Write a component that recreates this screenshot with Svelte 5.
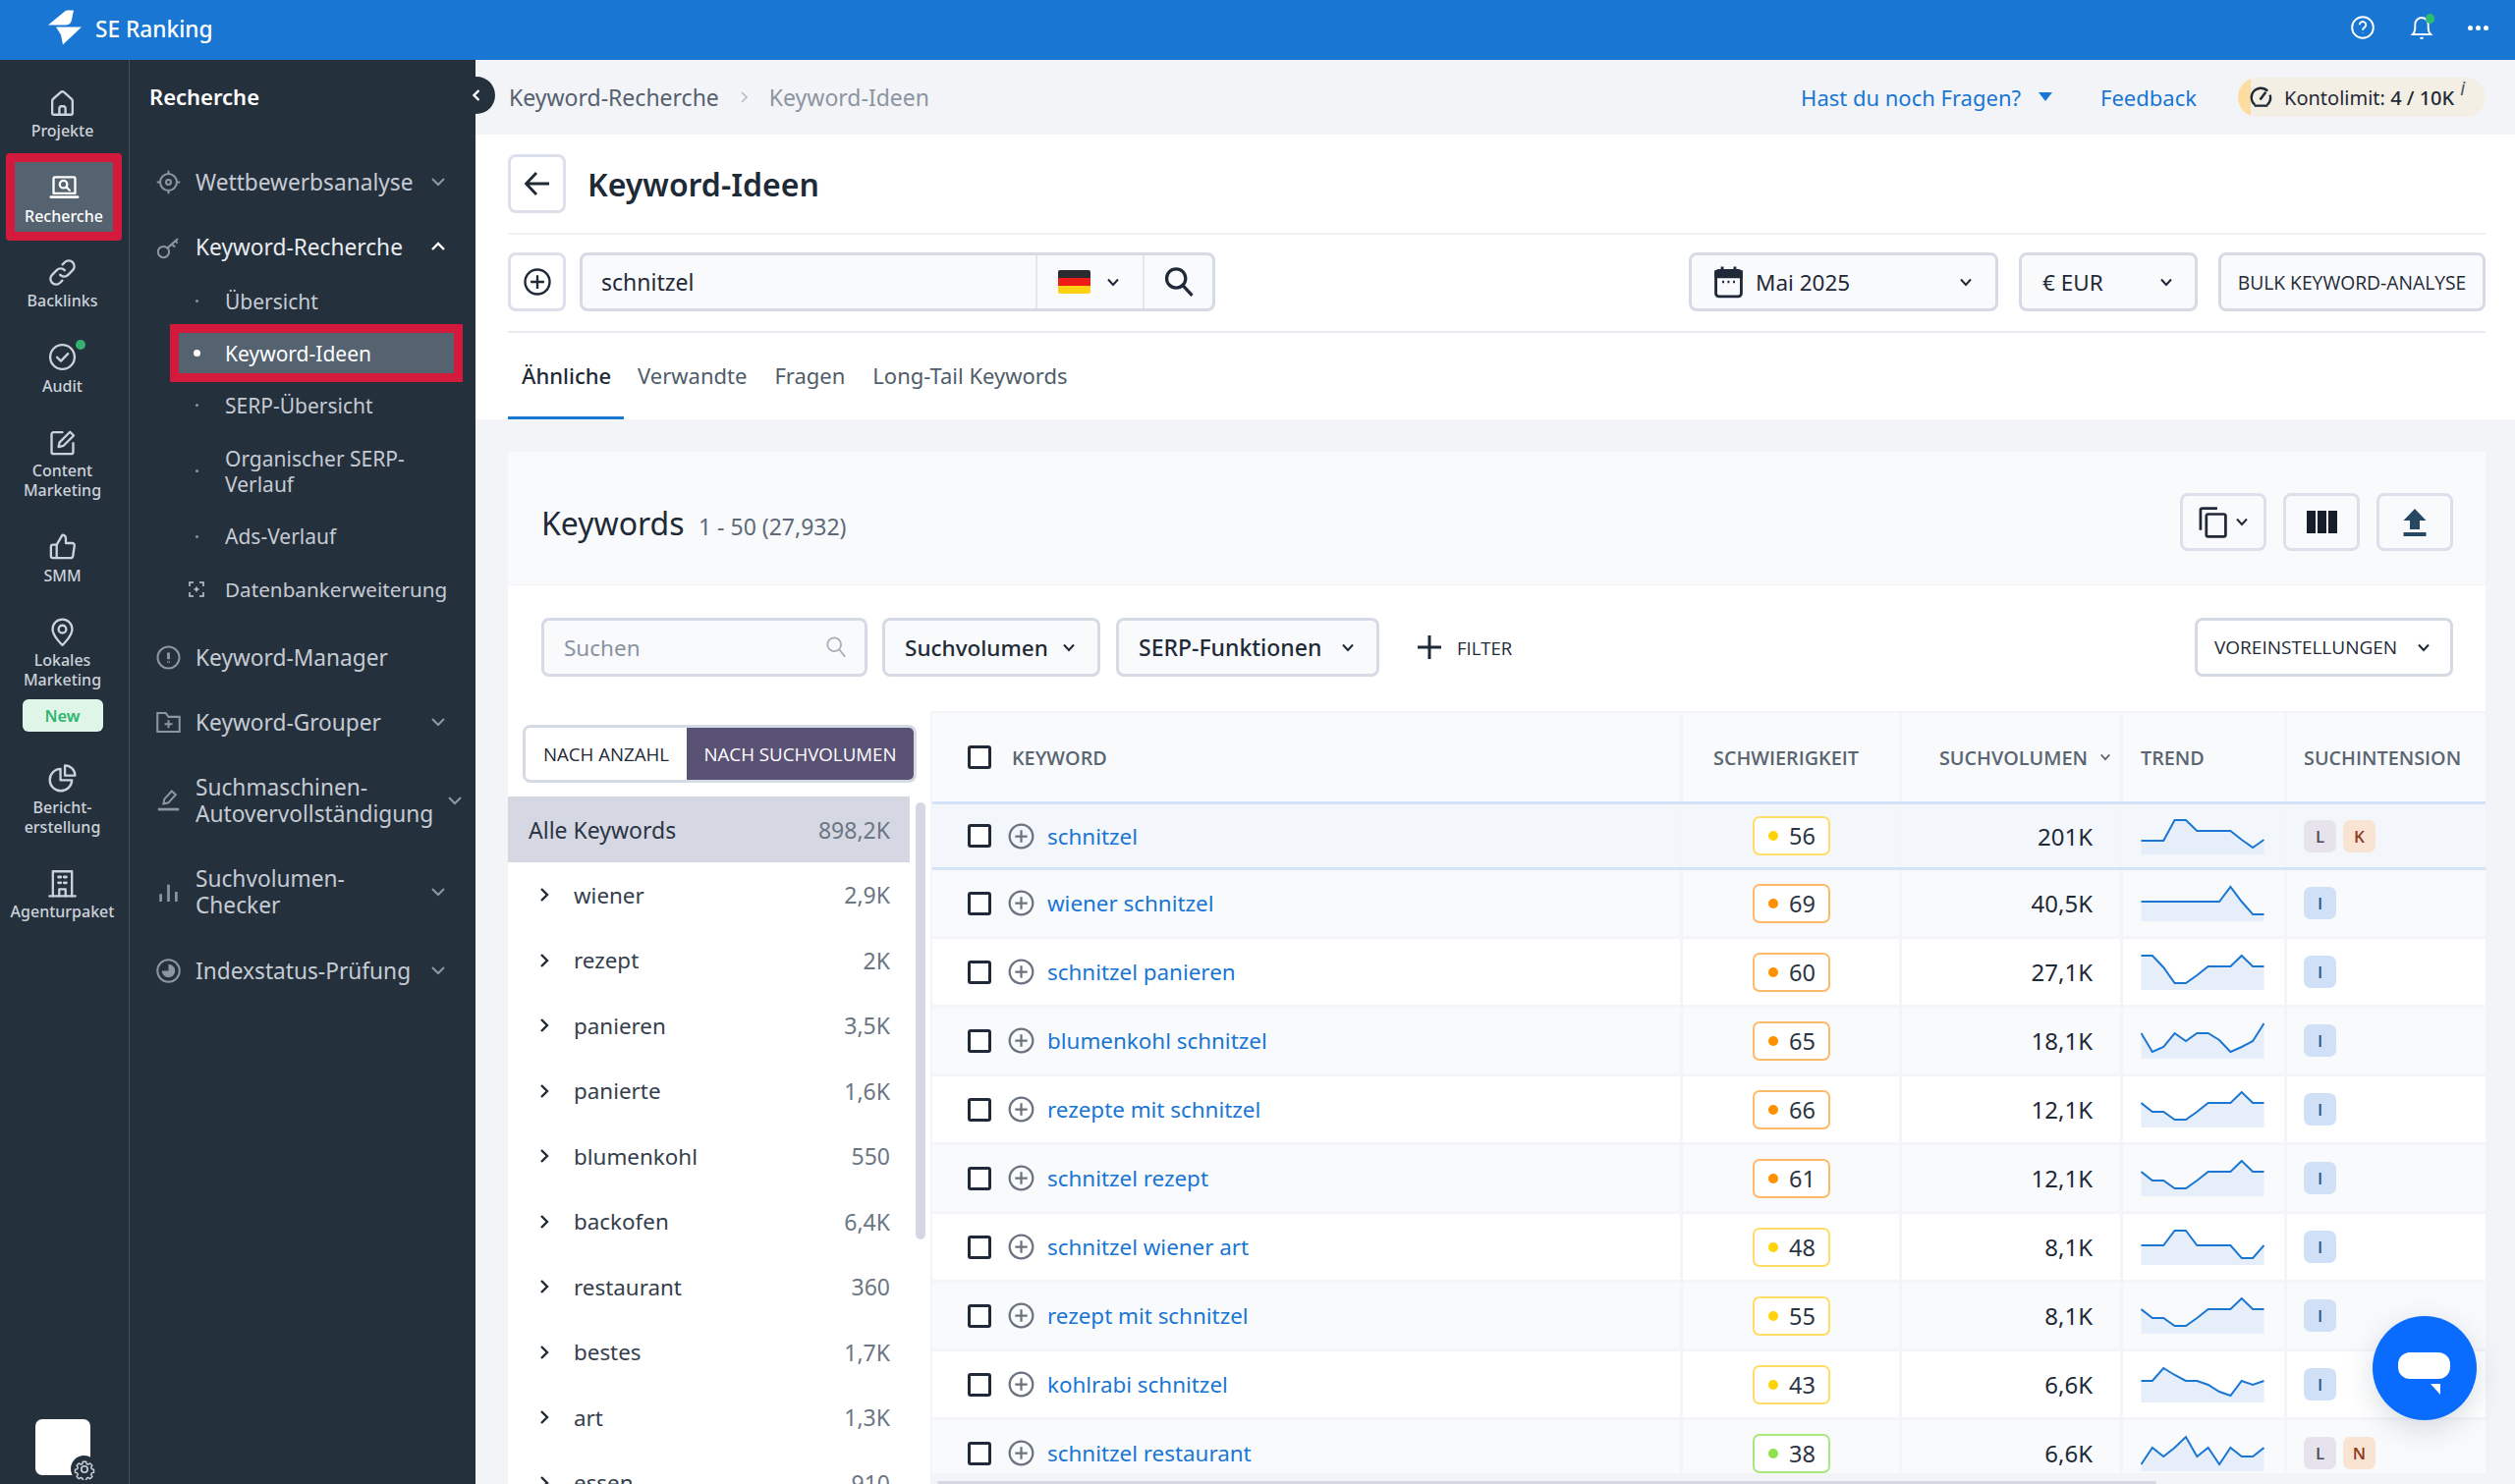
<script>
	const railItems = [
		{ icon: 'home', lines: ['Projekte'] },
		{ icon: 'research', lines: ['Recherche'], active: true },
		{ icon: 'link', lines: ['Backlinks'] },
		{ icon: 'audit', lines: ['Audit'], dot: true },
		{ icon: 'edit', lines: ['Content', 'Marketing'] },
		{ icon: 'thumb', lines: ['SMM'] },
		{ icon: 'pin', lines: ['Lokales', 'Marketing'], isNew: true },
		{ icon: 'pie', lines: ['Bericht-', 'erstellung'] },
		{ icon: 'building', lines: ['Agenturpaket'] }
	];

	const icons = {
		home: '<path d="M5 21.5a1 1 0 0 1-1-1V10.6a2 2 0 0 1 .7-1.5l6-5.3a2 2 0 0 1 2.6 0l6 5.3a2 2 0 0 1 .7 1.5v9.9a1 1 0 0 1-1 1z"/><path d="M9.6 21.5v-5.2a1.4 1.4 0 0 1 1.4-1.4h2a1.4 1.4 0 0 1 1.4 1.4v5.2"/>',
		research: '<path d="M3.5 17V5.2a1 1 0 0 1 1-1h15a1 1 0 0 1 1 1V17z"/><path d="M1.5 19.8h21" stroke-width="2.2"/><circle cx="11.3" cy="9.8" r="2.9"/><path d="m13.5 12 2.6 2.5"/>',
		link: '<path d="M10.2 13.8a4.4 4.4 0 0 0 6.3 0l3.6-3.6a4.4 4.4 0 0 0-6.2-6.3l-1.8 1.8"/><path d="M13.8 10.2a4.4 4.4 0 0 0-6.3 0l-3.6 3.6a4.4 4.4 0 0 0 6.2 6.3l1.8-1.8"/>',
		audit: '<circle cx="12" cy="12" r="9.6"/><path d="m7.8 12.2 3 3 5.6-5.8"/>',
		edit: '<path d="M12 4H5a1.5 1.5 0 0 0-1.5 1.5v14A1.5 1.5 0 0 0 5 21h14a1.5 1.5 0 0 0 1.5-1.5V12.5"/><path d="m9 15.5.8-3.6 8.2-8.2 2.9 2.9-8.2 8.1z"/>',
		thumb: '<path d="M7.5 21H4.6A1.6 1.6 0 0 1 3 19.4v-7.2a1.6 1.6 0 0 1 1.6-1.6h2.9z"/><path d="M7.5 10.6 12 2.8a2.7 2.7 0 0 1 2.7 2.7v3.8h5a1.8 1.8 0 0 1 1.8 2.1l-1.2 8a1.8 1.8 0 0 1-1.8 1.6H7.5"/>',
		pin: '<path d="M12 22.3s-7.7-7-7.7-12.6a7.7 7.7 0 0 1 15.4 0c0 5.6-7.7 12.6-7.7 12.6z"/><circle cx="12" cy="9.8" r="3"/>',
		pie: '<path d="M10.5 4.5a8.7 8.7 0 1 0 9 9h-9z"/><path d="M14 1.8a8 8 0 0 1 8 8h-8z"/>',
		building: '<path d="M1.8 22h20.4"/><path d="M4.5 22V2.5h15V22"/><path d="M9.5 22v-5.5h5V22"/><path d="M9 7h1.6M13.4 7H15M9 11.5h1.6M13.4 11.5H15" stroke-width="2.2"/>',
		target: '<circle cx="12" cy="12" r="7.5"/><circle cx="12" cy="12" r="2.2"/><path d="M12 1.5v3M12 19.5v3M1.5 12h3M19.5 12h3"/>',
		key: '<circle cx="7.5" cy="16.5" r="5"/><path d="m11 13 9.5-8.5M15 9.5l3 2.5M18.2 6.7l2 1.8"/>',
		info: '<circle cx="12" cy="12" r="9.8"/><path d="M12 13.5V7.5" stroke-width="2.6"/><circle cx="12" cy="16" r=".3"/>',
		folder: '<path d="M2 20.5V3.5h7.5L12 7h10v13.5z"/><path d="M12 10v7M8.5 13.5h7"/>',
		pencil: '<path d="m7.5 15.5.8-4.3 6.6-7.2 3.6 3.2-6.6 7.3z"/><path d="M2.5 20.5h19" stroke-width="2.4"/>',
		bars: '<path d="M5 20.5v-7M12 20.5V5M19 20.5v-9" stroke-width="2.4"/>',
		index: '<circle cx="12" cy="12" r="10"/><path d="M12 6a6 6 0 1 1-6 6h6z" fill="currentColor" stroke="none"/>'
	};

	const subItems = [
		{ label: 'Übersicht' },
		{ label: 'Keyword-Ideen', active: true },
		{ label: 'SERP-Übersicht' },
		{ label: 'Organischer SERP-Verlauf', tall: true },
		{ label: 'Ads-Verlauf' }
	];
	const navBottom = [
		{ icon: 'info', label: 'Keyword-Manager' },
		{ icon: 'folder', label: 'Keyword-Grouper', chev: true },
		{ icon: 'pencil', label: 'Suchmaschinen-Autovervollständigung', chev: true, tall: true, far: true },
		{ icon: 'bars', label: 'Suchvolumen-Checker', chev: true, tall: true },
		{ icon: 'index', label: 'Indexstatus-Prüfung', chev: true }
	];

	const groups = [
		['wiener', '2,9K'], ['rezept', '2K'], ['panieren', '3,5K'], ['panierte', '1,6K'],
		['blumenkohl', '550'], ['backofen', '6,4K'], ['restaurant', '360'], ['bestes', '1,7K'],
		['art', '1,3K'], ['essen', '910']
	];

	const shapeA = [11, 20, 20, 28, 28, 20, 11, 11, 11, 0, 11, 11];
	const rows = [
		{ kw: 'schnitzel', diff: 56, vol: '201K', trend: [22, 22, 22, 1, 1, 12, 12, 12, 12, 21, 29, 21], intents: ['L', 'K'] },
		{ kw: 'wiener schnitzel', diff: 69, vol: '40,5K', trend: [16, 16, 16, 16, 16, 16, 16, 16, 1, 16, 29, 29], intents: ['I'] },
		{ kw: 'schnitzel panieren', diff: 60, vol: '27,1K', trend: [1, 1, 13, 29, 29, 21, 12, 12, 12, 1, 12, 12], intents: ['I'] },
		{ kw: 'blumenkohl schnitzel', diff: 65, vol: '18,1K', trend: [10, 29, 24, 10, 18, 10, 10, 17, 29, 24, 18, 0], intents: ['I'] },
		{ kw: 'rezepte mit schnitzel', diff: 66, vol: '12,1K', trend: shapeA, intents: ['I'] },
		{ kw: 'schnitzel rezept', diff: 61, vol: '12,1K', trend: shapeA, intents: ['I'] },
		{ kw: 'schnitzel wiener art', diff: 48, vol: '8,1K', trend: [16, 16, 16, 1, 1, 16, 16, 16, 16, 29, 29, 16], intents: ['I'] },
		{ kw: 'rezept mit schnitzel', diff: 55, vol: '8,1K', trend: shapeA, intents: ['I'] },
		{ kw: 'kohlrabi schnitzel', diff: 43, vol: '6,6K', trend: [14, 14, 1, 8, 14, 14, 18, 25, 29, 14, 18, 14], intents: ['I'] },
		{ kw: 'schnitzel restaurant', diff: 38, vol: '6,6K', trend: [29, 12, 21, 12, 1, 21, 12, 29, 12, 21, 21, 12], intents: ['L', 'N'] }
	];

	function linePoints(t) {
		return t.map((v, i) => `${(i * 125) / 11},${v + 1}`).join(' ');
	}
	function areaPoints(t) {
		return `0,37 ${linePoints(t)} 125,37`;
	}
	function diffClass(d) {
		if (d < 40) return 'green';
		return d < 60 ? 'yellow' : 'orange';
	}
</script>

<div class="app">
	<header class="topbar">
		<svg class="logo" width="36" height="40" viewBox="0 0 36 40"><path d="M0 17.5 17 3.500Q18 2.500 20 2.500H26L24 12Q23.500 17.500 17 17.500z" /><path d="M8 19.500H34L15 37.500 13 27.500z" /></svg>
		<span class="brand">SE Ranking</span>
		<div class="top-icons">
			<svg width="26" height="26" viewBox="0 0 24 24" fill="none" stroke="#fff" stroke-width="1.8"><circle cx="12" cy="12" r="10" /><path d="M9 9.5a3 3 0 1 1 4.5 2.6c-1 .6-1.500 1.200-1.500 2.400" /><path d="M12 17.2v.3" /></svg>
			<span class="bell">
				<svg width="26" height="28" viewBox="0 0 24 26" fill="none" stroke="#fff" stroke-width="1.8"><path d="M3.5 19.500c1.500-1.500 2.300-3 2.300-6.500V10a6.200 6.200 0 0 1 12.400 0v3c0 3.500.8 5 2.300 6.500z" /><path d="M10.5 23h3" /></svg>
				<i></i>
			</span>
			<span class="dots"><i></i><i></i><i></i></span>
		</div>
	</header>

	<div class="body">
		<aside class="rail">
			{#each railItems as item}
				<div class="rail-item" class:active={item.active}>
					<span class="rail-icon">
						<svg width="31" height="31" viewBox="0 0 24 24" fill="none" stroke="currentColor" stroke-width="1.8" stroke-linecap="round" stroke-linejoin="round">{@html icons[item.icon]}</svg>
						{#if item.dot}<i class="rail-dot"></i>{/if}
					</span>
					<span class="rail-label">
						{#each item.lines as line}<span>{line}</span>{/each}
					</span>
					{#if item.isNew}<span class="new-badge">New</span>{/if}
				</div>
			{/each}
			<div class="avatar">
				<span class="gear">
					<svg width="22" height="22" viewBox="0 0 24 24" fill="none" stroke="#c8ced6" stroke-width="1.8" stroke-linejoin="round"><circle cx="12" cy="12" r="3.5" /><path d="M10 2.500h4l.6 2.800 1.800.8 2.500-1.500 2.700 2.800-1.500 2.400.8 1.900 2.600.6v3.800l-2.600.6-.8 1.900 1.500 2.400-2.700 2.800-2.500-1.500-1.800.8-.6 2.800h-4l-.6-2.800-1.800-.8-2.500 1.500-2.700-2.800 1.500-2.400-.8-1.900-2.600-.6v-3.800l2.600-.6.8-1.900-1.500-2.400 2.700-2.800 2.500 1.500 1.800-.8z" transform="translate(1.200 1.200) scale(.9)" /></svg>
				</span>
			</div>
		</aside>

		<nav class="nav">
			<div class="nav-title">Recherche</div>
			<button class="collapse" aria-label="Einklappen">
				<svg width="12" height="14" viewBox="0 0 12 14" fill="none" stroke="#fff" stroke-width="2.4"><path d="M8.5 2 3.500 7l5 5" /></svg>
			</button>

			<div class="nav-row">
				<svg class="nav-icon" width="27" height="27" viewBox="0 0 24 24" fill="none" stroke-width="1.8">{@html icons.target}</svg>
				<span>Wettbewerbsanalyse</span>
				<svg class="chev" width="16" height="10" viewBox="0 0 16 10" fill="none" stroke="currentColor" stroke-width="2"><path d="m2 2 6 6 6-6" /></svg>
			</div>

			<div class="nav-row open">
				<svg class="nav-icon" width="27" height="27" viewBox="0 0 24 24" fill="none" stroke-width="1.8">{@html icons.key}</svg>
				<span>Keyword-Recherche</span>
				<svg class="chev" width="16" height="10" viewBox="0 0 16 10" fill="none" stroke="#fff" stroke-width="2.4"><path d="m2 8 6-6 6 6" /></svg>
			</div>

			<div class="sublist">
				{#each subItems as s}
					<div class="sub-row" class:active={s.active} class:tall={s.tall}>
						<i class="sub-dot"></i>
						<span>{s.label}</span>
					</div>
				{/each}
				<div class="sub-row">
					<svg class="sub-icon" width="16" height="16" viewBox="0 0 16 16" fill="none" stroke="currentColor" stroke-width="1.5"><path d="M1 5V1h4M11 1h4v4M15 11v4h-4M5 15H1v-4M8 5.5v5M5.5 8h5" /></svg>
					<span class="db-label">Datenbankerweiterung</span>
				</div>
			</div>

			<div class="nav-bottom">
				{#each navBottom as n}
					<div class="nav-row" class:tall={n.tall}>
						<svg class="nav-icon" width="27" height="27" viewBox="0 0 24 24" fill="none" stroke-width="1.8" color="#8c96a2">{@html icons[n.icon]}</svg>
						<span class="nav-label">{n.label}</span>
						{#if n.chev}
							<svg class="chev" class:far={n.far} width="16" height="10" viewBox="0 0 16 10" fill="none" stroke="currentColor" stroke-width="2"><path d="m2 2 6 6 6-6" /></svg>
						{/if}
					</div>
				{/each}
			</div>
		</nav>

		<main class="main">
			<div class="crumbbar">
				<span class="crumb">Keyword-Recherche</span>
				<svg width="10" height="14" viewBox="0 0 10 14" fill="none" stroke="#b4bbc6" stroke-width="1.6"><path d="m3 2 5 5-5 5" /></svg>
				<span class="crumb light">Keyword-Ideen</span>
				<div class="crumb-right">
					<span class="link">Hast du noch Fragen?</span>
					<svg class="tri" width="14" height="9" viewBox="0 0 14 9"><path d="M0 0h14L7 9z" fill="#1976d2" /></svg>
					<span class="link feedback">Feedback</span>
					<span class="limit">
						<svg width="23" height="23" viewBox="0 0 24 24" fill="none" stroke="#1f2937" stroke-width="2.4"><path d="M5.5 19.6A10 10 0 1 1 19 4.900" /><path d="M21.5 9a10 10 0 0 1-3 10.600" /><path d="M5 20.5h14" /><path d="m11 14 6-8" stroke-width="2.6" /></svg>
						<span class="limit-text">Kontolimit: <b>4 / 10K</b></span>
						<em>i</em>
					</span>
				</div>
			</div>

			<section class="head">
				<div class="title-row">
					<button class="sq" aria-label="Zurück">
						<svg width="30" height="30" viewBox="0 0 30 30" fill="none" stroke="#1f2937" stroke-width="2.8"><path d="M27 15H4M14 4 3.500 15 14 26" /></svg>
					</button>
					<h1>Keyword-Ideen</h1>
				</div>
				<div class="search-row">
					<button class="sq" aria-label="Hinzufügen">
						<svg width="30" height="30" viewBox="0 0 24 24" fill="none" stroke="#1f2937" stroke-width="1.9"><circle cx="12" cy="12" r="10" /><path d="M12 6.5v11M6.5 12h11" /></svg>
					</button>
					<div class="kw-input">
						<span class="kw-value">schnitzel</span>
						<span class="flag-cell">
							<span class="flag"><i></i><i></i><i></i></span>
							<svg width="14" height="9" viewBox="0 0 14 9" fill="none" stroke="#1f2937" stroke-width="2"><path d="m2 1.5 5 5.500 5-5.500" /></svg>
						</span>
						<span class="glass-cell">
							<svg width="34" height="34" viewBox="0 0 24 24" fill="none" stroke="#1f2937" stroke-width="2.3"><circle cx="10" cy="9.5" r="6.8" /><path d="m15 14.8 6.500 7" /></svg>
						</span>
					</div>
					<div class="search-right">
						<div class="select date">
							<svg width="31" height="34" viewBox="0 0 24 26" fill="none" stroke="#1f2937" stroke-width="2.2"><rect x="2" y="4" width="20" height="20.5" rx="2.5" /><path d="M2 5h20v4H2z" fill="#1f2937" /><path d="M7 1v4M17 1v4" /><path d="M7 13h1.500M11.200 13h1.500M15.500 13H17" stroke-width="2" /></svg>
							<span>Mai 2025</span>
							<svg class="sel-chev" width="14" height="9" viewBox="0 0 14 9" fill="none" stroke="#1f2937" stroke-width="2"><path d="m2 1.5 5 5.500 5-5.500" /></svg>
						</div>
						<div class="select eur">
							<span>€ EUR</span>
							<svg class="sel-chev" width="14" height="9" viewBox="0 0 14 9" fill="none" stroke="#1f2937" stroke-width="2"><path d="m2 1.5 5 5.500 5-5.500" /></svg>
						</div>
						<div class="select bulk">BULK KEYWORD-ANALYSE</div>
					</div>
				</div>
				<div class="tabs">
					<span class="tab active">Ähnliche</span>
					<span class="tab">Verwandte</span>
					<span class="tab">Fragen</span>
					<span class="tab">Long-Tail Keywords</span>
				</div>
			</section>

			<section class="card">
				<div class="card-head">
					<div class="card-title">Keywords <small>1 - 50 (27,932)</small></div>
					<div class="card-tools">
						<button class="tool copy" aria-label="Kopieren">
							<svg width="32" height="34" viewBox="0 0 24 26" fill="none" stroke="#1f2937" stroke-width="2.1" stroke-linejoin="round"><path d="M2 19V3.500A1.500 1.500 0 0 1 3.500 2H15" /><rect x="6.5" y="6.5" width="15" height="17.5" rx="1.5" /></svg>
							<svg width="14" height="9" viewBox="0 0 14 9" fill="none" stroke="#1f2937" stroke-width="2"><path d="m2 1.5 5 5.500 5-5.500" /></svg>
						</button>
						<button class="tool cols" aria-label="Spalten">
							<span></span><span></span><span></span>
						</button>
						<button class="tool" aria-label="Export">
							<svg width="24" height="30" viewBox="0 0 24 30"><path d="M12 1 23.500 13H17v9H7v-9H.5z" fill="#264863" /><path d="M.5 25h23v4H.5z" fill="#264863" /></svg>
						</button>
					</div>
				</div>

				<div class="filters">
					<div class="field">
						<span>Suchen</span>
						<svg width="22" height="24" viewBox="0 0 24 26" fill="none" stroke="#a8afba" stroke-width="2"><circle cx="10" cy="10" r="7.5" /><path d="m15.500 15.500 6.500 8" /></svg>
					</div>
					<div class="filter-sel vol-sel">Suchvolumen
						<svg width="14" height="9" viewBox="0 0 14 9" fill="none" stroke="#1f2937" stroke-width="2"><path d="m2 1.5 5 5.500 5-5.500" /></svg>
					</div>
					<div class="filter-sel serp-sel">SERP-Funktionen
						<svg width="14" height="9" viewBox="0 0 14 9" fill="none" stroke="#1f2937" stroke-width="2"><path d="m2 1.5 5 5.500 5-5.500" /></svg>
					</div>
					<div class="add-filter">
						<svg width="24" height="24" viewBox="0 0 24 24" fill="none" stroke="#1f2937" stroke-width="3"><path d="M12 0v24M0 12h24" /></svg>
						<span>FILTER</span>
					</div>
					<div class="presets">VOREINSTELLUNGEN
						<svg width="14" height="9" viewBox="0 0 14 9" fill="none" stroke="#1f2937" stroke-width="2"><path d="m2 1.5 5 5.500 5-5.500" /></svg>
					</div>
				</div>

				<div class="split">
					<div class="groups">
						<div class="toggle">
							<span class="t-off">NACH ANZAHL</span>
							<span class="t-on">NACH SUCHVOLUMEN</span>
						</div>
						<div class="all-row"><span>Alle Keywords</span><span class="val">898,2K</span></div>
						{#each groups as g}
							<div class="group-row">
								<svg width="10" height="16" viewBox="0 0 10 16" fill="none" stroke="#1f2937" stroke-width="2.4"><path d="m2 2 6 6-6 6" /></svg>
								<span class="g-name">{g[0]}</span>
								<span class="val">{g[1]}</span>
							</div>
						{/each}
						<div class="vbar"></div>
					</div>

					<div class="tablewrap">
						<div class="table">
							<div class="tr th">
								<div class="td kw">
									<span class="cb"></span>
									<span class="kw-head">KEYWORD</span>
								</div>
								<div class="td diff-h">SCHWIERIGKEIT</div>
								<div class="td vol-h">SUCHVOLUMEN
									<svg width="12" height="8" viewBox="0 0 14 9" fill="none" stroke="#5a6672" stroke-width="2"><path d="m2 1.5 5 5.500 5-5.500" /></svg>
								</div>
								<div class="td trend">TREND</div>
								<div class="td intent">SUCHINTENSION</div>
							</div>
							{#each rows as r, i}
								<div class="tr" class:first={i === 0} class:alt={i % 2 === 1}>
									<div class="td kw">
										<span class="cb"></span>
										<svg width="27" height="27" viewBox="0 0 24 24" fill="none" stroke="#6a7480" stroke-width="2"><circle cx="12" cy="12" r="10.5" /><path d="M12 6.5v11M6.5 12h11" /></svg>
										<span class="kw-link">{r.kw}</span>
									</div>
									<div class="td diff">
										<span class="badge {diffClass(r.diff)}"><i></i>{r.diff}</span>
									</div>
									<div class="td vol">{r.vol}</div>
									<div class="td trend">
										<svg width="126" height="37" viewBox="0 0 125 37">
											<polygon points={areaPoints(r.trend)} fill="#e6eef9" />
											<polyline points={linePoints(r.trend)} fill="none" stroke="#1976d2" stroke-width="2" />
										</svg>
									</div>
									<div class="td intent">
										{#each r.intents as t}
											<span class="chip {t}">{t}</span>
										{/each}
									</div>
								</div>
							{/each}
						</div>
						<div class="hbar"><span></span></div>
					</div>
				</div>
			</section>

			<button class="chat" aria-label="Chat">
				<span class="bubble"></span>
				<span class="tail"></span>
			</button>
		</main>
	</div>
</div>

<style>
	:global(body) {
		margin: 0;
		font-family: "Noto Sans", "Open Sans", sans-serif;
		color: #1f2937;
	}

	button {
		font: inherit;
		cursor: pointer;
		padding: 0;
	}

	.app {
		width: 2560px;
		height: 1511px;
		overflow: hidden;
		display: flex;
		flex-direction: column;
		background: #f2f4f8;
	}

	.topbar {
		height: 61px;
		flex: none;
		background: #1976d2;
		display: flex;
		align-items: center;
		color: #fff;
	}
	.logo {
		margin: -6px 12px 0 49px;
		fill: #fff;
	}
	.brand {
		font-size: 22.7px;
		font-weight: 500;
		margin-top: -3px;
	}
	.top-icons {
		margin: -5px 0 0 auto;
		display: flex;
		align-items: center;
		padding-right: 27px;
		gap: 34px;
	}
	.bell {
		position: relative;
		display: flex;
	}
	.bell i {
		position: absolute;
		right: 0;
		top: 0;
		width: 9px;
		height: 10px;
		border-radius: 50%;
		background: #2ebd6e;
	}
	.dots {
		display: flex;
		gap: 3px;
	}
	.dots i {
		width: 5px;
		height: 5px;
		background: #fff;
		border-radius: 50%;
	}

	.body {
		flex: 1;
		min-height: 0;
		display: flex;
	}

	/* left icon rail */
	.rail {
		width: 132px;
		flex: none;
		box-sizing: border-box;
		background: #25303d;
		border-right: 1px solid #47525f;
		padding: 28px 4px 9px 0;
		display: flex;
		flex-direction: column;
		gap: 32.5px;
		color: #ccd2d9;
	}
	.rail-item {
		display: flex;
		flex-direction: column;
		align-items: center;
	}
	.rail-item.active {
		background: #54636f;
		box-shadow: 0 0 0 9px #d31a3d;
		border-radius: 1px;
		margin: -11px 12px -6px 15px;
		padding: 11px 0 6px;
		color: #fff;
	}
	.rail-icon {
		height: 30px;
		margin-bottom: 4px;
		display: flex;
		align-items: center;
		position: relative;
	}
	.rail-dot {
		position: absolute;
		right: -8px;
		top: -3px;
		width: 10px;
		height: 10px;
		border-radius: 50%;
		background: #33b26f;
	}
	.rail-label {
		display: flex;
		flex-direction: column;
		align-items: center;
		font-size: 16px;
		line-height: 20px;
		font-weight: 500;
	}
	.new-badge {
		margin-top: 10px;
		width: 82px;
		height: 33px;
		border-radius: 6px;
		background: #dff5e8;
		color: #2fb673;
		font-size: 16.5px;
		font-weight: 600;
		display: flex;
		align-items: center;
		justify-content: center;
	}
	.avatar {
		margin-top: auto;
		margin-left: 36px;
		width: 56px;
		height: 57px;
		flex: none;
		background: #fff;
		border-radius: 7px;
		position: relative;
	}
	.gear {
		position: absolute;
		right: -7px;
		bottom: -7px;
		width: 27px;
		height: 27px;
		border-radius: 50%;
		background: #25303d;
		display: flex;
		align-items: center;
		justify-content: center;
	}

	/* second level navigation */
	.nav {
		width: 352px;
		flex: none;
		box-sizing: border-box;
		background: #25303d;
		position: relative;
		padding-top: 22px;
		color: #c5cbd3;
	}
	.nav-title {
		font-size: 22px;
		font-weight: 600;
		line-height: 30px;
		color: #fff;
		padding-left: 20px;
		margin-bottom: 39px;
	}
	.collapse {
		position: absolute;
		right: -20px;
		top: 17px;
		width: 38px;
		height: 38px;
		border-radius: 50%;
		background: #25303d;
		border: 0;
		display: flex;
		align-items: center;
		justify-content: center;
		z-index: 2;
	}
	.nav-row {
		height: 66px;
		display: flex;
		align-items: center;
		box-sizing: border-box;
		padding: 0 30px 0 26px;
		font-size: 22.7px;
		line-height: 27px;
	}
	.nav-row.tall {
		height: 93.5px;
	}
	.nav-row.open {
		color: #e8ebee;
	}
	.nav-icon {
		flex: none;
		margin-right: 14px;
		color: #8c96a2;
		stroke: #8c96a2;
	}
	.nav-label {
		flex: 1;
	}
	.chev {
		flex: none;
		margin-left: auto;
		color: #8f99a5;
	}
	.chev.far {
		margin-right: -17px;
	}
	.nav-row.tall .nav-label {
		max-width: 230px;
	}
	.sublist {
		margin-top: -4px;
	}
	.sub-row {
		height: 53.3px;
		width: 280px;
		box-sizing: border-box;
		margin-left: 50px;
		display: flex;
		align-items: center;
		font-size: 21px;
		line-height: 26px;
	}
	.sub-row.tall {
		height: 80px;
	}
	.db-label {
		font-size: 20.7px;
	}
	.sub-dot {
		width: 3px;
		height: 3px;
		border-radius: 50%;
		background: #8c96a2;
		margin: 0 27px 0 17px;
		flex: none;
	}
	.sub-icon {
		flex: none;
		margin: 0 21px 0 10px;
	}
	.sub-row.active {
		height: 41px;
		margin-top: 6px;
		margin-bottom: 6px;
		background: #54636f;
		box-shadow: 0 0 0 9px #d31a3d;
		color: #fff;
	}
	.sub-row.active .sub-dot {
		width: 7px;
		height: 7px;
		background: #fff;
		margin: 0 25px 0 15px;
	}
	.nav-bottom {
		margin-top: 10px;
	}

	/* main area */
	.main {
		flex: 1;
		min-width: 0;
		position: relative;
		background: #f2f4f8;
	}
	.crumbbar {
		height: 76px;
		box-sizing: border-box;
		padding: 0 30px 0 34px;
		display: flex;
		align-items: center;
		font-size: 23px;
		gap: 20px;
	}
	.crumb {
		color: #55616e;
	}
	.crumb.light {
		color: #8c95a1;
		margin-left: 1px;
	}
	.crumb-right {
		margin-left: auto;
		display: flex;
		align-items: center;
	}
	.link {
		color: #1976d2;
		font-size: 22px;
	}
	.tri {
		margin: 0 0 2px 18px;
	}
	.feedback {
		margin-left: 49px;
	}
	.limit {
		margin-left: 42px;
		height: 40px;
		width: 252px;
		box-sizing: border-box;
		border-radius: 20px;
		background: linear-gradient(90deg, #fddc9f 13px, #f3efe4 13px);
		display: flex;
		align-items: center;
		padding-left: 12px;
		font-size: 20px;
	}
	.limit-text {
		margin-left: 12px;
		white-space: nowrap;
	}
	.limit-text b {
		font-weight: 500;
	}
	.limit em {
		font-size: 19px;
		margin: -18px 0 0 6px;
		color: #4b5563;
	}

	.head {
		background: #fff;
		height: 290px;
		box-sizing: border-box;
		padding: 20px 30px 0 33px;
	}
	.sq {
		width: 59px;
		height: 60px;
		box-sizing: border-box;
		flex: none;
		background: #fff;
		border: 3px solid #dde0ea;
		border-radius: 8px;
		display: flex;
		align-items: center;
		justify-content: center;
	}
	.title-row {
		display: flex;
		align-items: center;
		gap: 22px;
		padding-bottom: 20px;
		border-bottom: 2px solid #eff1f5;
	}
	h1 {
		margin: 0;
		font-size: 32px;
		font-weight: 600;
		color: #1f2a37;
	}
	.search-row {
		display: flex;
		gap: 14px;
		padding: 18px 0 20px;
		border-bottom: 2px solid #e8eaf0;
	}
	.kw-input {
		width: 647px;
		height: 60px;
		box-sizing: border-box;
		background: #f9fafc;
		border: 3px solid #d6dae5;
		border-radius: 8px;
		display: flex;
		align-items: stretch;
	}
	.kw-value {
		width: 461px;
		flex: none;
		box-sizing: border-box;
		padding-left: 19px;
		display: flex;
		align-items: center;
		font-size: 23px;
	}
	.flag-cell {
		width: 111px;
		flex: none;
		border-left: 2px solid #e3e6ed;
		border-right: 2px solid #e3e6ed;
		display: flex;
		align-items: center;
		padding-left: 21px;
		gap: 16px;
		box-sizing: border-box;
	}
	.flag {
		width: 33px;
		height: 24px;
		display: flex;
		flex-direction: column;
		border-radius: 2px;
		overflow: hidden;
	}
	.flag i {
		flex: 1;
		background: #2b2b2f;
	}
	.flag i:nth-child(2) {
		background: #ee1c16;
	}
	.flag i:nth-child(3) {
		background: #fdd214;
	}
	.glass-cell {
		flex: 1;
		display: flex;
		align-items: center;
		justify-content: center;
	}
	.search-right {
		margin-left: auto;
		display: flex;
		gap: 21px;
	}
	.select {
		height: 60px;
		box-sizing: border-box;
		background: #f9fafc;
		border: 3px solid #d6dae5;
		border-radius: 8px;
		display: flex;
		align-items: center;
		font-size: 22.5px;
	}
	.date {
		width: 315px;
		padding: 0 23px 0 22px;
		gap: 12px;
	}
	.eur {
		width: 182px;
		padding: 0 22px 0 21px;
	}
	.sel-chev {
		margin-left: auto;
	}
	.bulk {
		width: 272px;
		justify-content: center;
		font-family: "Open Sans", sans-serif;
		font-size: 19.3px;
		font-weight: 500;
		white-space: nowrap;
	}
	.tabs {
		height: 88px;
		display: flex;
	}
	.tab {
		display: flex;
		align-items: center;
		height: 88px;
		box-sizing: border-box;
		padding: 0 14px 2px;
		font-size: 22px;
		color: #4f5c6a;
	}
	.tab.active {
		color: #1f2937;
		border-bottom: 3px solid #1976d2;
		font-weight: 500;
		padding-bottom: 0;
		width: 118px;
	}

	/* keywords card */
	.card {
		margin: 33px 30px 0 33px;
		background: #fff;
	}
	.card-head {
		height: 136px;
		box-sizing: border-box;
		background: #f9fafc;
		border-bottom: 1px solid #f0f2f6;
		padding: 42px 33px 0 34px;
		display: flex;
		justify-content: space-between;
		align-items: flex-start;
	}
	.card-title {
		font-size: 32px;
		line-height: 60px;
		margin-top: 1px;
		color: #1f2a37;
	}
	.card-title small {
		font-size: 23px;
		color: #5e6a78;
		margin-left: 6px;
	}
	.card-tools {
		display: flex;
		gap: 17px;
	}
	.tool {
		width: 78px;
		height: 59px;
		box-sizing: border-box;
		background: #f9fafc;
		border: 3px solid #dde0ea;
		border-radius: 8px;
		display: flex;
		align-items: center;
		justify-content: center;
	}
	.tool.copy {
		width: 88px;
		gap: 6px;
	}
	.cols {
		gap: 2px;
	}
	.cols span {
		width: 9px;
		height: 23px;
		background: #161e2b;
	}
	.filters {
		height: 128px;
		box-sizing: border-box;
		padding: 33px 33px 0 34px;
		display: flex;
		align-items: flex-start;
	}
	.field,
	.filter-sel,
	.presets {
		height: 60px;
		box-sizing: border-box;
		border: 3px solid #d6dae5;
		border-radius: 8px;
		background: #f9fafc;
		display: flex;
		align-items: center;
		font-size: 22.5px;
	}
	.field {
		width: 332px;
		padding: 0 18px 0 20px;
		justify-content: space-between;
		color: #8a93a0;
	}
	.filter-sel {
		margin-left: 15px;
		padding: 0 22px 0 20px;
		justify-content: space-between;
		font-weight: 500;
		color: #1f2a37;
	}
	.vol-sel {
		width: 222px;
	}
	.serp-sel {
		width: 268px;
		margin-left: 16px;
		font-size: 23px;
	}
	.add-filter {
		margin-left: 39px;
		height: 60px;
		display: flex;
		align-items: center;
		gap: 16px;
		font-family: "Open Sans", sans-serif;
		font-size: 18.5px;
		font-weight: 500;
	}
	.presets {
		margin-left: auto;
		width: 263px;
		background: #fff;
		padding: 0 20px 0 17px;
		justify-content: space-between;
		font-family: "Open Sans", sans-serif;
		font-size: 19px;
		font-weight: 500;
	}

	.split {
		display: flex;
		height: 787px;
		background: #f2f4f8;
	}
	.groups {
		width: 430px;
		flex: none;
		background: #fff;
		position: relative;
		overflow: hidden;
	}
	.toggle {
		margin: 14px 0 14px 15px;
		width: 401px;
		height: 59px;
		box-sizing: border-box;
		border: 3px solid #d6dae5;
		border-radius: 8px;
		display: flex;
		overflow: hidden;
		font-family: "Open Sans", sans-serif;
		font-size: 18.7px;
		font-weight: 500;
	}
	.t-off {
		width: 164px;
		display: flex;
		align-items: center;
		justify-content: center;
		background: #fff;
	}
	.t-on {
		flex: 1;
		display: flex;
		align-items: center;
		justify-content: center;
		background: #5a5275;
		color: #fff;
	}
	.all-row {
		width: 409px;
		height: 67px;
		box-sizing: border-box;
		background: #d5d8e3;
		padding: 0 20px 0 21px;
		display: flex;
		align-items: center;
		justify-content: space-between;
		font-size: 23px;
		color: #2b3543;
	}
	.group-row {
		width: 409px;
		height: 66.5px;
		box-sizing: border-box;
		padding: 0 20px 0 32px;
		display: flex;
		align-items: center;
		font-size: 22.4px;
		color: #343e4c;
	}
	.g-name {
		margin-left: 25px;
	}
	.val {
		margin-left: auto;
		color: #6b7684;
		font-size: 23px;
	}
	.vbar {
		position: absolute;
		left: 415px;
		top: 93px;
		width: 10px;
		height: 445px;
		border-radius: 5px;
		background: #d5d8e3;
	}

	.tablewrap {
		margin-left: 2px;
		width: 1581px;
		flex: none;
		padding-top: 2px;
	}
	.table {
		height: 774px;
		overflow: hidden;
	}
	.tr {
		display: grid;
		grid-template-columns: 761px 223px 225px 167px 205px;
		height: 70px;
		box-sizing: border-box;
		background: #fff;
		border-bottom: 3px solid #f4f5f9;
	}
	.tr.alt,
	.tr.th {
		background: #f9fafc;
	}
	.tr.th {
		height: 90px;
		border-bottom: 0;
	}
	.tr.th .td {
		font-family: "Open Sans", sans-serif;
		font-size: 19.8px;
		font-weight: 600;
		color: #5a6672;
	}
	.tr.first {
		background: #f3f7fc;
		border-top: 3px solid #d3e3f8;
		border-bottom: 3px solid #d3e3f8;
	}
	.td {
		display: flex;
		align-items: center;
		box-sizing: border-box;
		border-left: 3px solid #f4f5f9;
		font-size: 22.4px;
	}
	.td.kw {
		border-left: 0;
		padding-left: 36px;
	}
	.kw-head {
		margin-left: 21px;
	}
	.tr:not(.th) .kw .cb {
		margin-right: 17px;
	}
	.cb {
		width: 24px;
		height: 24px;
		box-sizing: border-box;
		flex: none;
		background: #fff;
		border: 3px solid #1f2937;
		border-radius: 3px;
	}
	.kw-link {
		margin-left: 13px;
		color: #1976d2;
	}
	.diff-h {
		padding-left: 31px;
	}
	.vol-h {
		justify-content: flex-end;
		padding-right: 9px;
		gap: 12px;
	}
	.trend {
		padding-left: 18px;
	}
	.intent {
		padding-left: 17px;
		gap: 7px;
	}
	.diff {
		padding-left: 71px;
	}
	.badge {
		width: 79px;
		height: 40px;
		box-sizing: border-box;
		border: 2px solid;
		border-radius: 7px;
		display: flex;
		align-items: center;
		padding-left: 14px;
		gap: 11px;
		font-size: 23.5px;
		color: #2b3543;
		background: #fff;
	}
	.badge i {
		width: 10px;
		height: 10px;
		border-radius: 50%;
	}
	.badge.yellow {
		border-color: #ffdd66;
	}
	.badge.yellow i {
		background: #ffd30a;
	}
	.badge.orange {
		border-color: #ffb96b;
	}
	.badge.orange i {
		background: #ff9100;
	}
	.badge.green {
		border-color: #a6e87a;
	}
	.badge.green i {
		background: #8fe24d;
	}
	.vol {
		justify-content: flex-end;
		padding-right: 28px;
		color: #1f2a37;
		font-size: 24px;
	}
	.chip {
		width: 33px;
		height: 33px;
		border-radius: 7px;
		display: flex;
		align-items: center;
		justify-content: center;
		font-family: "Open Sans", sans-serif;
		font-size: 17px;
		font-weight: 600;
	}
	.chip.I {
		background: #d0e1f7;
		color: #2c5a8c;
	}
	.chip.L {
		background: #e6e3ec;
		color: #4a4a5a;
	}
	.chip.K,
	.chip.N {
		background: #f9e3d3;
		color: #8a3c1c;
	}
	.hbar {
		height: 11px;
		box-sizing: border-box;
		padding: 8px 0 0 5px;
	}
	.hbar span {
		display: block;
		width: 1241px;
		height: 3px;
		background: #d5d8e3;
		border-radius: 2px;
	}

	.chat {
		position: absolute;
		left: 1931px;
		top: 1279px;
		width: 106px;
		height: 106px;
		border: 0;
		border-radius: 50%;
		background: #0a6cff;
		box-shadow: 0 8px 30px rgb(40 60 90 / 0.18);
	}
	.bubble {
		position: absolute;
		left: 26px;
		top: 37px;
		width: 53px;
		height: 27px;
		border-radius: 12px;
		background: #fff;
	}
	.tail {
		position: absolute;
		left: 59px;
		top: 69px;
		width: 0;
		height: 0;
		border-top: 11px solid #fff;
		border-left: 10px solid transparent;
	}
</style>
